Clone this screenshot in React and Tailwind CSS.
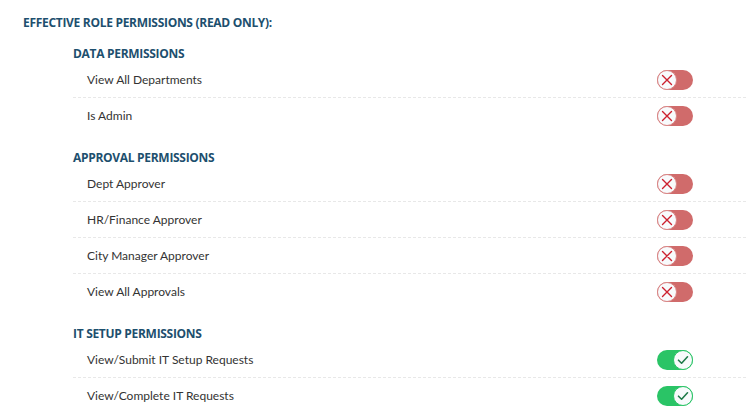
import React from 'react';

const sections = [
  {
    title: 'DATA PERMISSIONS',
    items: [
      { label: 'View All Departments', on: false },
      { label: 'Is Admin', on: false },
    ],
  },
  {
    title: 'APPROVAL PERMISSIONS',
    items: [
      { label: 'Dept Approver', on: false },
      { label: 'HR/Finance Approver', on: false },
      { label: 'City Manager Approver', on: false },
      { label: 'View All Approvals', on: false },
    ],
  },
  {
    title: 'IT SETUP PERMISSIONS',
    items: [
      { label: 'View/Submit IT Setup Requests', on: true },
      { label: 'View/Complete IT Requests', on: true },
    ],
  },
];

const Toggle = ({ on }) => {
  if (on) {
    return (
      <div className="flex h-5 w-9 items-center justify-end rounded-full bg-[#2ac466]">
        <div className="flex h-[20px] w-[20px] items-center justify-center rounded-full border border-[#2ac466] bg-[#f8fafc]">
          <svg width="14" height="14" viewBox="0 0 14 14" fill="none">
            <path d="M2.5 7.2 L5.6 10.2 L11.5 3.8" stroke="#1f7a4a" strokeWidth="1.6" strokeLinecap="round" strokeLinejoin="round" />
          </svg>
        </div>
      </div>
    );
  }
  return (
    <div className="flex h-5 w-9 items-center justify-start rounded-full bg-[#d06b6b]">
      <div className="flex h-[20px] w-[20px] items-center justify-center rounded-full border border-[#d98585] bg-[#f8fafc]">
        <svg width="14" height="14" viewBox="0 0 14 14" fill="none">
          <path d="M2.5 2.5 L11.5 11.5 M11.5 2.5 L2.5 11.5" stroke="#cc1f2e" strokeWidth="1.4" strokeLinecap="round" />
        </svg>
      </div>
    </div>
  );
};

export default function App() {
  return (
    <div className="min-h-screen bg-white pl-[23px] pt-[14px] font-['Segoe_UI','Open_Sans',sans-serif]">
      <h2 className="text-[12px] leading-[18px] font-bold tracking-[-0.3px] text-[#1d4f6e]">
        EFFECTIVE ROLE PERMISSIONS (READ ONLY):
      </h2>
      <div className="ml-[50px] mt-[14px]">
        {sections.map((s, si) => (
          <div key={s.title} className={si > 0 ? 'mt-[16px]' : ''}>
            <h3 className="text-[12px] leading-[16px] font-bold tracking-[-0.3px] text-[#1d4f6e]">{s.title}</h3>
            {s.items.map((it, i) => (
              <div
                key={it.label}
                className={
                  'flex h-9 items-center justify-between pl-[14px] pr-[53px] ' +
                  (i < s.items.length - 1 ? 'border-b border-dashed border-[#e8e8e8]' : '')
                }
              >
                <span className="font-['Lato',sans-serif] text-[12px] text-[#333]">{it.label}</span>
                <Toggle on={it.on} />
              </div>
            ))}
          </div>
        ))}
      </div>
    </div>
  );
}
